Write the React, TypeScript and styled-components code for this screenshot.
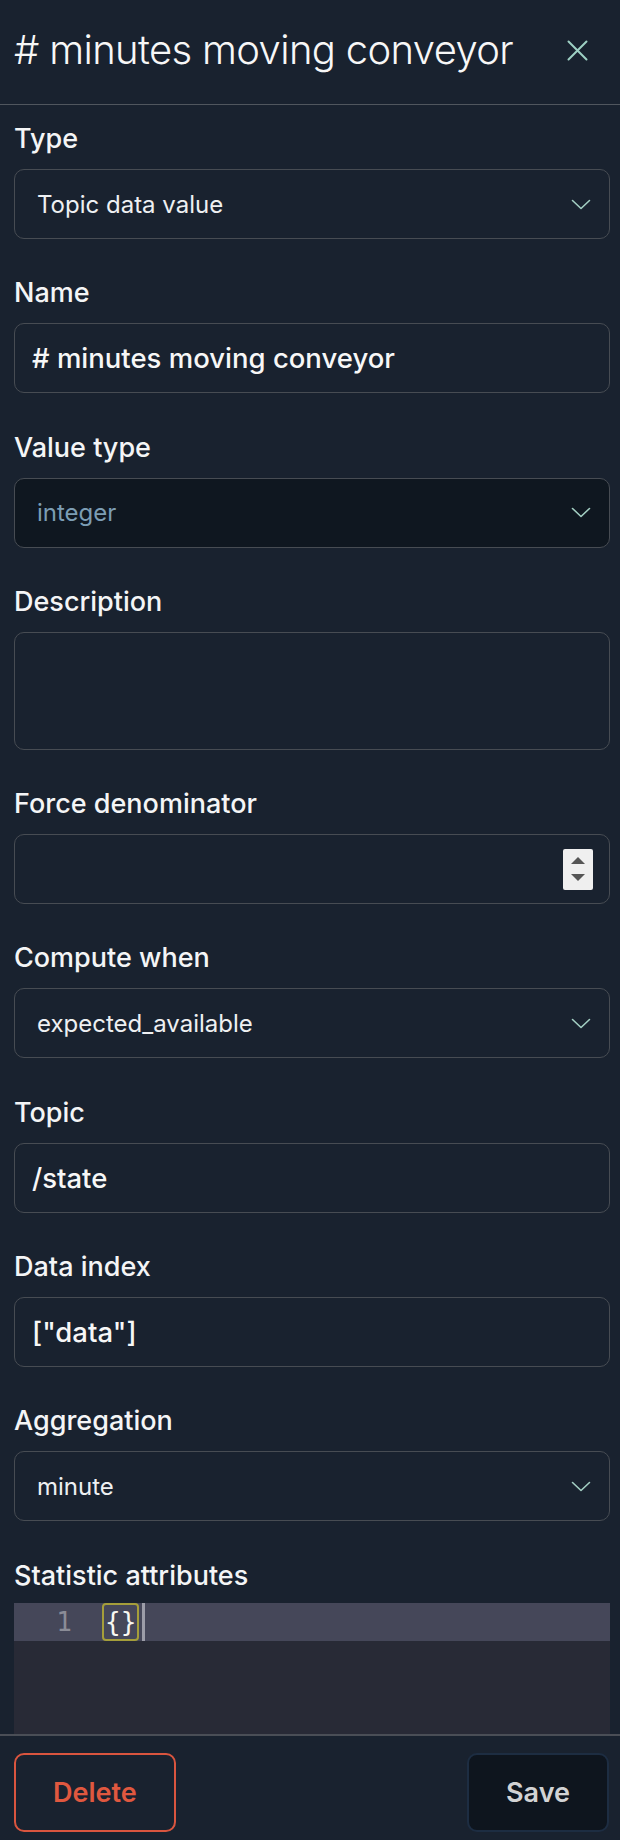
import styled, { createGlobalStyle } from "styled-components";

const GlobalStyle = createGlobalStyle`
  * {
    box-sizing: border-box;
  }
  body {
    margin: 0;
    background: #19222f;
    font-family: Inter, "Noto Sans", sans-serif;
    color: #f4f5f6;
  }
`;

const StyledPanel = styled.div`
  width: 620px;
  height: 1840px;
  display: flex;
  flex-direction: column;
  background: #19222f;
  overflow: hidden;
`;

const StyledHeader = styled.div`
  height: 105px;
  flex-shrink: 0;
  display: flex;
  align-items: center;
  justify-content: space-between;
  padding: 0 32px 4px 14px;
  border-bottom: 1px solid #50565e;
  .title {
    margin: 0;
    font-size: 40px;
    line-height: 48px;
    font-weight: 300;
    letter-spacing: -0.65px;
    color: #f7f7f7;
  }
  .close {
    background: none;
    border: none;
    padding: 0;
    display: flex;
    cursor: pointer;
  }
`;

const StyledBody = styled.div`
  flex: 1;
  min-height: 0;
  overflow: hidden;
  padding: 18px 10px 0 14px;
  display: flex;
  flex-direction: column;
  gap: 38.3px;
`;

const StyledField = styled.div`
  display: flex;
  flex-direction: column;
  .form-label {
    font-size: 27px;
    line-height: 32px;
    font-weight: 500;
    color: #f4f5f6;
    margin-bottom: 14px;
  }
`;

const StyledSelect = styled.div<{ $dark?: boolean; $muted?: boolean }>`
  height: 70px;
  display: flex;
  align-items: center;
  justify-content: space-between;
  padding: 0 18px 0 22px;
  border: 1px solid #474c53;
  border-radius: 10px;
  background: ${(p) => (p.$dark ? "#0f1720" : "transparent")};
  color: ${(p) => (p.$muted ? "#7c9db4" : "#eef0f2")};
  font-size: 24px;
  font-weight: 400;
  cursor: pointer;
`;

const StyledInput = styled.input`
  height: 70px;
  width: 100%;
  padding: 0 17px;
  border: 1px solid #474c53;
  border-radius: 10px;
  background: transparent;
  color: #f7f7f7;
  font-family: inherit;
  font-size: 27.5px;
  font-weight: 500;
  outline: none;
`;

const StyledTextArea = styled.textarea`
  height: 118px;
  width: 100%;
  padding: 14px 17px;
  border: 1px solid #474c53;
  border-radius: 10px;
  background: transparent;
  color: #f7f7f7;
  font-family: inherit;
  font-size: 26px;
  resize: none;
  outline: none;
`;

const StyledNumberBox = styled.div`
  height: 70px;
  display: flex;
  align-items: center;
  padding: 0 16px 0 17px;
  border: 1px solid #474c53;
  border-radius: 10px;
  input {
    flex: 1;
    min-width: 0;
    border: none;
    outline: none;
    background: transparent;
    color: #f7f7f7;
    font-family: inherit;
    font-size: 26px;
  }
`;

const StyledSpinner = styled.div`
  width: 30px;
  height: 41px;
  background: #efefef;
  border-radius: 2px;
  display: flex;
  flex-direction: column;
  align-items: center;
  justify-content: center;
  gap: 10px;
`;

const StyledEditor = styled.div`
  height: 220px;
  flex-shrink: 0;
  margin-top: -3px;
  background: #282a36;
  font-family: "DejaVu Sans Mono", "Liberation Mono", monospace;
  font-size: 26px;
  .line {
    height: 38px;
    display: flex;
    align-items: center;
    background: #454759;
  }
  .gutter {
    width: 76px;
    padding-right: 18px;
    text-align: right;
    color: #8b8c97;
  }
  .code {
    display: flex;
    align-items: stretch;
    height: 100%;
    padding-left: 12px;
  }
  .match {
    display: flex;
    align-items: center;
    padding: 0 1px;
    color: #f8f8f2;
    border: 2px solid #a59e3a;
    border-radius: 4px;
  }
  .cursor {
    width: 3px;
    margin-left: 3px;
    background: #9c9da8;
  }
`;

const StyledFooter = styled.div`
  height: 106px;
  flex-shrink: 0;
  border-top: 2px solid #4a4e56;
  padding: 17px 11px 0 14px;
  display: flex;
  justify-content: space-between;
  align-items: flex-start;
`;

const StyledButton = styled.button<{ $variant: "danger" | "primary" }>`
  height: 79px;
  padding: 0 37px;
  border-radius: 10px;
  font-family: inherit;
  font-size: 27px;
  font-weight: 600;
  cursor: pointer;
  border: 2px solid ${(p) => (p.$variant === "danger" ? "#d9553f" : "#1d2d42")};
  background: ${(p) => (p.$variant === "danger" ? "transparent" : "#0e151e")};
  color: ${(p) => (p.$variant === "danger" ? "#e0583f" : "#d2d3d4")};
`;

const Chevron = () => (
  <svg width="20" height="11" viewBox="0 0 20 11" fill="none">
    <polyline
      points="1.5,1.5 10,9.5 18.5,1.5"
      stroke="#a3cfc3"
      strokeWidth="1.6"
      strokeLinecap="round"
      strokeLinejoin="round"
    />
  </svg>
);

const CloseIcon = () => (
  <svg width="21" height="21" viewBox="0 0 21 21" fill="none">
    <path
      d="M1.5 1.5 L19.5 19.5 M19.5 1.5 L1.5 19.5"
      stroke="#9ed1c4"
      strokeWidth="2"
      strokeLinecap="round"
    />
  </svg>
);

const SelectField = ({
  title,
  value,
  dark,
  muted,
}: {
  title: string;
  value: string;
  dark?: boolean;
  muted?: boolean;
}) => (
  <StyledField>
    <label className="form-label">{title}</label>
    <StyledSelect $dark={dark} $muted={muted}>
      <span>{value}</span>
      <Chevron />
    </StyledSelect>
  </StyledField>
);

const InputField = ({ title, value }: { title: string; value: string }) => (
  <StyledField>
    <label className="form-label">{title}</label>
    <StyledInput type="text" defaultValue={value} />
  </StyledField>
);

const App = () => {
  return (
    <StyledPanel>
      <GlobalStyle />
      <StyledHeader>
        <h1 className="title"># minutes moving conveyor</h1>
        <button className="close" aria-label="Close">
          <CloseIcon />
        </button>
      </StyledHeader>
      <StyledBody>
        <SelectField title="Type" value="Topic data value" />
        <InputField title="Name" value="# minutes moving conveyor" />
        <SelectField title="Value type" value="integer" dark muted />
        <StyledField>
          <label className="form-label">Description</label>
          <StyledTextArea defaultValue="" />
        </StyledField>
        <StyledField>
          <label className="form-label">Force denominator</label>
          <StyledNumberBox>
            <input type="text" defaultValue="" />
            <StyledSpinner>
              <svg width="14" height="7" viewBox="0 0 14 7">
                <polygon points="7,0 14,7 0,7" fill="#555" />
              </svg>
              <svg width="14" height="7" viewBox="0 0 14 7">
                <polygon points="0,0 14,0 7,7" fill="#555" />
              </svg>
            </StyledSpinner>
          </StyledNumberBox>
        </StyledField>
        <SelectField title="Compute when" value="expected_available" />
        <InputField title="Topic" value="/state" />
        <InputField title="Data index" value='["data"]' />
        <SelectField title="Aggregation" value="minute" />
        <StyledField>
          <label className="form-label">Statistic attributes</label>
          <StyledEditor>
            <div className="line">
              <div className="gutter">1</div>
              <div className="code">
                <span className="match">{"{}"}</span>
                <span className="cursor" />
              </div>
            </div>
          </StyledEditor>
        </StyledField>
      </StyledBody>
      <StyledFooter>
        <StyledButton $variant="danger">Delete</StyledButton>
        <StyledButton $variant="primary">Save</StyledButton>
      </StyledFooter>
    </StyledPanel>
  );
};

export default App;
